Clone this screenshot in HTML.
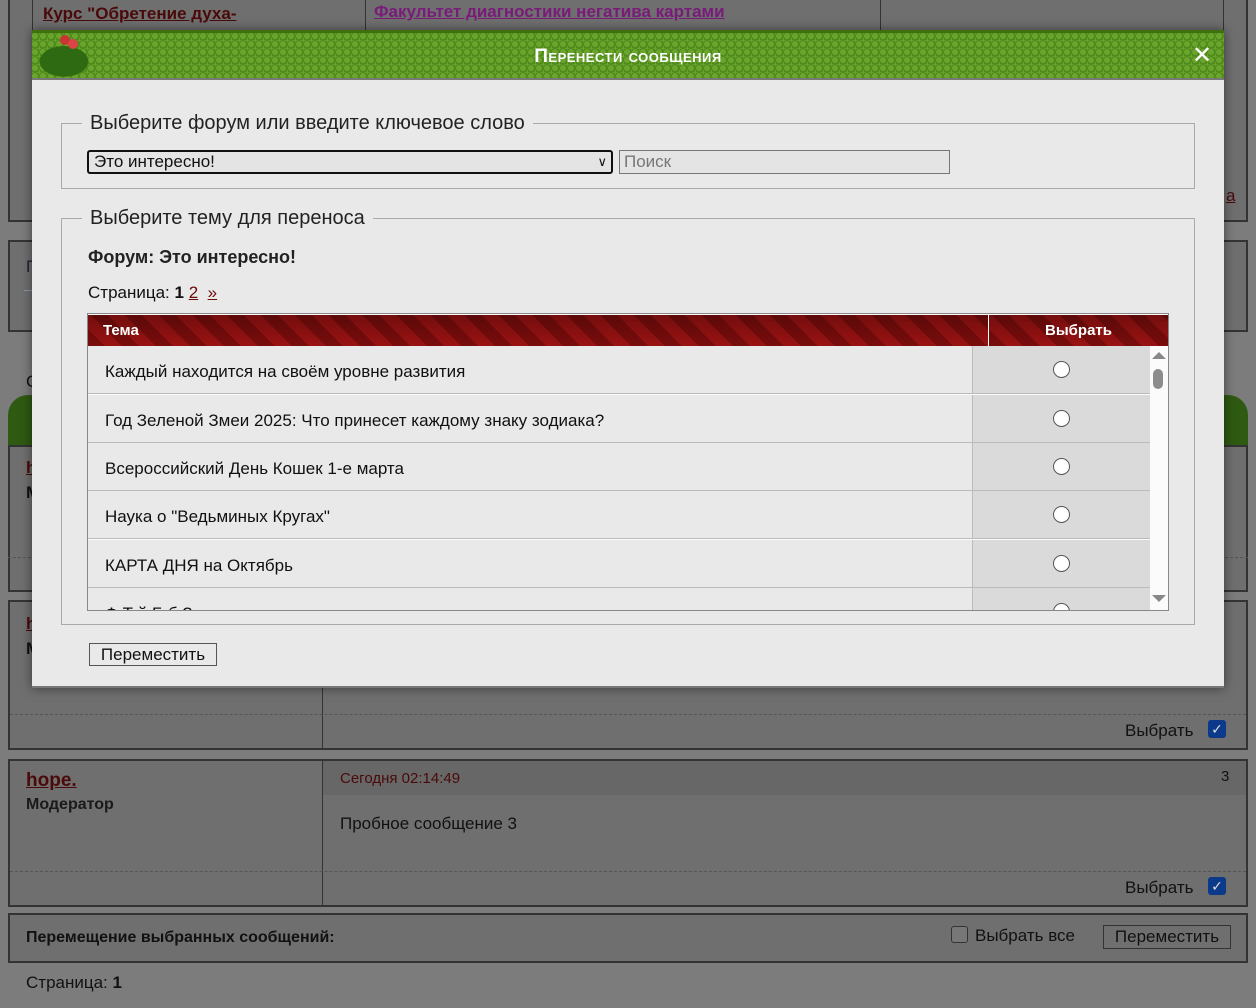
<!DOCTYPE html>
<html><head><meta charset="utf-8"><style>
*{box-sizing:border-box;margin:0;padding:0}
body{width:1256px;height:1008px;background:#7c7c7c;font-family:"Liberation Sans","DejaVu Sans",sans-serif;color:#111;position:relative;overflow:hidden;font-size:17px}
.a{position:absolute}
.box{position:absolute;border:2px solid #333;background:#6f6f6f}
.lnk{color:#4a0a0a;text-decoration:underline;font-weight:bold}
.chk{position:absolute;width:18px;height:18px;background:#0c3a8a;border-radius:3px;color:#ddd;font-size:14px;text-align:center;line-height:18px}
.modal{position:absolute;left:32px;top:30px;width:1192px;height:658px;background:#e9e9e9;box-shadow:0 0 10px rgba(0,0,0,.5);border-bottom:2px solid #777}
.hdr{position:absolute;left:0;top:0;width:1192px;height:50px;background:repeating-radial-gradient(circle at 3px 3px,#6aa42c 0 3px,#4f8a1c 3px 5px);background-size:8px 8px;border-top:3px solid #3e7010;border-bottom:2px solid #777}
.hdr .t{position:absolute;left:0;right:0;top:13px;text-align:center;color:#fff;font-weight:bold;font-size:19px;letter-spacing:.5px;font-variant:small-caps}
fieldset{position:absolute;border:1px solid #aaa;border-width:1px}
legend{font-size:20px;padding:0 8px;margin-left:20px;color:#222}
.th{position:absolute;top:315px;height:31px;background:linear-gradient(180deg,rgba(0,0,0,.25),rgba(0,0,0,0)),repeating-linear-gradient(45deg,#7a0c0c 0 12px,#9a1212 12px 24px);color:#fff;font-weight:bold;font-size:15px;line-height:31px}
.row{position:absolute;left:88px;width:1062px;height:48px;border-bottom:1px solid #bbb;background:#e9e9e9;font-size:17px}
.row .c1{position:absolute;left:17px;top:16px}
.row .c2{position:absolute;left:884px;top:0;width:178px;height:47px;background:#dadada;border-left:1px solid #bbb}
.rad{position:absolute;left:80px;top:15px;width:17px;height:17px;border:1px solid #555;border-radius:50%;background:#fff}
</style></head><body>
<!-- background -->
<div class="box" style="left:8px;top:-2px;width:1240px;height:224px"></div>
<div class="a" style="left:32px;top:-2px;width:1192px;height:50px;border:1px solid #333;border-top:0"></div>
<div class="a" style="left:365px;top:0;width:1px;height:48px;background:#333"></div>
<div class="a" style="left:880px;top:0;width:1px;height:48px;background:#333"></div>
<div class="a lnk" style="left:43px;top:4px;font-size:17px">Курс "Обретение духа-</div>
<div class="a" style="left:374px;top:2px;font-size:17px;color:#7a1a7a;font-weight:bold;text-decoration:underline">Факультет диагностики негатива картами</div>
<div class="a" style="left:1226px;top:186px;color:#4a0a0a;text-decoration:underline">а</div>
<div class="box" style="left:8px;top:240px;width:1240px;height:92px"></div>
<div class="a" style="left:24px;top:290px;width:10px;border-top:1px solid #8899aa"></div>
<div class="a" style="left:26px;top:257px;color:#223">П</div>
<div class="a" style="left:26px;top:372px">С</div>
<div class="a" style="left:8px;top:395px;width:26px;height:52px;background:#2e5a12;border-radius:20px 0 0 0"></div>
<div class="a" style="left:1222px;top:395px;width:26px;height:52px;background:#2e5a12;border-radius:0 20px 0 0"></div>
<div class="box" style="left:8px;top:445px;width:1240px;height:147px"></div>
<div class="a lnk" style="left:26px;top:458px">h</div>
<div class="a" style="left:26px;top:483px;font-weight:bold">М</div>
<div class="a" style="left:8px;top:557px;width:1240px;border-top:1px dashed #555"></div>
<div class="box" style="left:8px;top:600px;width:1240px;height:150px"></div>
<div class="a lnk" style="left:26px;top:614px">h</div>
<div class="a" style="left:26px;top:639px;font-weight:bold">М</div>
<div class="a" style="left:322px;top:600px;width:1px;height:148px;background:#333"></div>
<div class="a" style="left:10px;top:714px;width:1236px;border-top:1px dashed #555"></div>
<div class="a" style="left:1125px;top:721px">Выбрать</div><div class="chk" style="left:1208px;top:720px">✓</div>
<div class="box" style="left:8px;top:759px;width:1240px;height:148px"></div>
<div class="a" style="left:323px;top:761px;width:923px;height:34px;background:#676767"></div>
<div class="a" style="left:322px;top:759px;width:1px;height:146px;background:#333"></div>
<div class="a lnk" style="left:26px;top:770px;font-size:19px">hope.</div>
<div class="a" style="left:26px;top:796px;font-weight:bold;font-size:16px;color:#1a1a1a">Модератор</div>
<div class="a" style="left:340px;top:770px;color:#4a0a0a;font-size:15px">Сегодня 02:14:49</div>
<div class="a" style="left:1221px;top:768px;font-size:15px">3</div>
<div class="a" style="left:340px;top:814px">Пробное сообщение 3</div>
<div class="a" style="left:10px;top:871px;width:1236px;border-top:1px dashed #555"></div>
<div class="a" style="left:1125px;top:878px">Выбрать</div><div class="chk" style="left:1208px;top:877px">✓</div>
<div class="box" style="left:8px;top:913px;width:1240px;height:50px"></div>
<div class="a" style="left:26px;top:929px;font-weight:bold;font-size:16px">Перемещение выбранных сообщений:</div>
<div class="a" style="left:951px;top:926px;width:17px;height:17px;border:1px solid #333;border-radius:3px;background:#777"></div>
<div class="a" style="left:975px;top:926px">Выбрать все</div>
<div class="a" style="left:1103px;top:925px;width:128px;height:24px;border:1px solid #333;text-align:center;line-height:22px">Переместить</div>
<div class="a" style="left:26px;top:973px">Страница: <b>1</b></div>

<!-- modal -->
<div class="modal">
 <div class="hdr"><div class="t">Перенести сообщения</div>
  <div class="a" style="left:4px;top:2px;width:70px;height:44px;background:radial-gradient(ellipse at 40% 60%,#2d6a12 0 40%,transparent 42%)"></div>
  <div class="a" style="left:28px;top:2px;width:10px;height:10px;border-radius:50%;background:#c33"></div>
  <div class="a" style="left:36px;top:6px;width:10px;height:10px;border-radius:50%;background:#d44"></div>
  <div class="a" style="left:1160px;top:8px;color:#fff;font-weight:bold;font-size:24px">✕</div>
 </div>
</div>
<fieldset style="left:61px;top:112px;width:1134px;height:77px"><legend>Выберите форум или введите ключевое слово</legend></fieldset>
<div class="a" style="left:87px;top:150px;width:526px;height:24px;border:2px solid #111;border-radius:3px;background:#e4e4e4;font-size:17px;padding-left:5px;line-height:20px">Это интересно!<span style="position:absolute;right:4px;top:0;font-size:13px">&#x2228;</span></div>
<div class="a" style="left:619px;top:150px;width:331px;height:24px;border:1px solid #777;background:#e4e4e4;color:#777;padding-left:4px;line-height:22px">Поиск</div>
<fieldset style="left:61px;top:207px;width:1134px;height:418px"><legend>Выберите тему для переноса</legend></fieldset>
<div class="a" style="left:88px;top:247px;font-weight:bold;font-size:18px;color:#222">Форум: Это интересно!</div>
<div class="a" style="left:88px;top:283px">Страница: <b>1</b> <span style="color:#6a0a0a;text-decoration:underline">2</span>&nbsp; <span style="color:#6a0a0a;text-decoration:underline">»</span></div>
<div class="a" style="left:87px;top:313px;width:1082px;height:298px;border:1px solid #888;background:#fbfbfb"></div>
<div class="th" style="left:88px;width:900px;padding-left:15px">Тема</div>
<div class="th" style="left:989px;width:179px;text-align:center">Выбрать</div>
<div class="row" style="top:346px"><div class="c1">Каждый находится на своём уровне развития</div><div class="c2"><div class="rad"></div></div></div>
<div class="row" style="top:395px"><div class="c1">Год Зеленой Змеи 2025: Что принесет каждому знаку зодиака?</div><div class="c2"><div class="rad"></div></div></div>
<div class="row" style="top:443px"><div class="c1">Всероссийский День Кошек 1-е марта</div><div class="c2"><div class="rad"></div></div></div>
<div class="row" style="top:491px"><div class="c1">Наука о "Ведьминых Кругах"</div><div class="c2"><div class="rad"></div></div></div>
<div class="row" style="top:540px"><div class="c1">КАРТА ДНЯ на Октябрь</div><div class="c2"><div class="rad"></div></div></div>
<div class="row" style="top:588px;height:22px;overflow:hidden;border:0"><div class="c1">Ф                                 Т  й   Б б  З</div><div class="c2" style="height:22px"><div class="rad"></div></div></div>
<div class="a" style="left:1152px;top:352px;width:0;height:0;border:7px solid transparent;border-bottom:7px solid #888;border-top:0"></div>
<div class="a" style="left:1153px;top:369px;width:10px;height:20px;border-radius:5px;background:#8c8c8c"></div>
<div class="a" style="left:1152px;top:595px;width:0;height:0;border:7px solid transparent;border-top:7px solid #888;border-bottom:0"></div>
<div class="a" style="left:89px;top:643px;width:128px;height:23px;border:1px solid #555;background:#e9e9e9;text-align:center;line-height:22px">Переместить</div>
</body></html>
